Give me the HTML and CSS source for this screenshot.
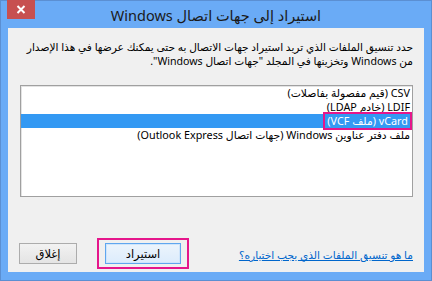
FILE: index.html
```html
<!DOCTYPE html>
<html lang="ar" dir="rtl">
<head>
<meta charset="utf-8">
<title>استيراد إلى جهات اتصال Windows</title>
<link rel="stylesheet" href="styles.css">
</head>
<body>
<div class="window">
  <div class="titlebar">
    <span class="close-btn" aria-label="إغلاق">
      <svg width="10" height="9" viewBox="0 0 10 9"><path d="M1.5 1 L8.5 8 M8.5 1 L1.5 8" stroke="#fff" stroke-width="2"/></svg>
    </span>
    <span class="title">استيراد إلى جهات اتصال Windows</span>
  </div>
  <div class="client">
    <p class="desc">حدد تنسيق الملفات الذي تريد استيراد جهات الاتصال به حتى يمكنك عرضها في هذا الإصدار<br>من Windows وتخزينها في المجلد "جهات اتصال Windows".</p>
    <div class="listbox">
      <div class="item">CSV (قيم مفصولة بفاصلات)</div>
      <div class="item">LDIF (خادم LDAP)</div>
      <div class="item selected"><span class="mark">vCard (ملف VCF)</span></div>
      <div class="item">ملف دفتر عناوين Windows (جهات اتصال Outlook Express)</div>
    </div>
    <div class="footer">
      <a class="help" href="#">ما هو تنسيق الملفات الذي يجب اختياره؟</a>
      <span class="highlight-box"><button class="btn default">استيراد</button></span>
      <button class="btn">إغلاق</button>
    </div>
  </div>
</div>
</body>
</html>
```
FILE: styles.css
```css
html, body {
  margin: 0;
  padding: 0;
}
body {
  width: 432px;
  height: 281px;
  overflow: hidden;
  font-family: "Noto Sans", "DejaVu Sans", sans-serif;
  font-size: 11px;
  color: #000;
}
.window {
  box-sizing: border-box;
  width: 432px;
  height: 281px;
  background: #6aabf6;
  border: 1px solid #5b8fd2;
  padding: 0 7px 8px 7px;
  display: flex;
  flex-direction: column;
}
.titlebar {
  position: relative;
  height: 27px;
  flex: none;
  display: flex;
  align-items: center;
  justify-content: center;
}
.title {
  font-size: 14.5px;
  color: #1a1a1a;
}
.close-btn {
  position: absolute;
  left: -1px;
  top: -1px;
  width: 28px;
  height: 19px;
  background: #c75050;
  display: flex;
  align-items: center;
  justify-content: center;
}
.client {
  flex: 1;
  background: #f0f0f0;
  display: flex;
  flex-direction: column;
  padding: 12px 11px 3px 11px;
}
.desc {
  margin: 0;
  font-size: 10.6px;
  line-height: 14px;
  white-space: nowrap;
}
.listbox {
  margin: 17px 0 0 1px;
  height: 110px;
  background: #fff;
  border: 1px solid #a0a0a0;
  box-shadow: inset 1px 1px 0 #e3e3e3;
  box-sizing: content-box;
}
.item {
  height: 14px;
  line-height: 14px;
  padding-right: 2px;
  font-size: 10.8px;
  white-space: nowrap;
}
.item.selected {
  background: #3399f3;
  color: #fff;
}
.mark {
  display: inline-block;
  outline: 2px solid #e5168b;
  outline-offset: 0px;
  padding: 0 2px;
  line-height: 14px;
}
.footer {
  margin-top: auto;
  display: flex;
  align-items: center;
  gap: 20px;
}
.help {
  color: #0066cc;
  text-decoration: underline;
  font-size: 10.6px;
  margin-left: auto;
  margin-top: 3px;
}
.highlight-box {
  display: flex;
  border: 2px solid #e5168b;
  padding: 3px 6px;
}
.btn {
  font-family: inherit;
  font-size: 11.5px;
  height: 21px;
  width: 58px;
  padding: 0;
  border: 1px solid #acacac;
  background: linear-gradient(#f2f2f2, #e4e4e4);
  color: #000;
}
.btn.default {
  width: 76px;
  border-color: #5fa6ef;
  box-shadow: inset 0 0 0 1px #cfe5fb;
  background: linear-gradient(#ecf4fc, #dcecfc);
}
```
